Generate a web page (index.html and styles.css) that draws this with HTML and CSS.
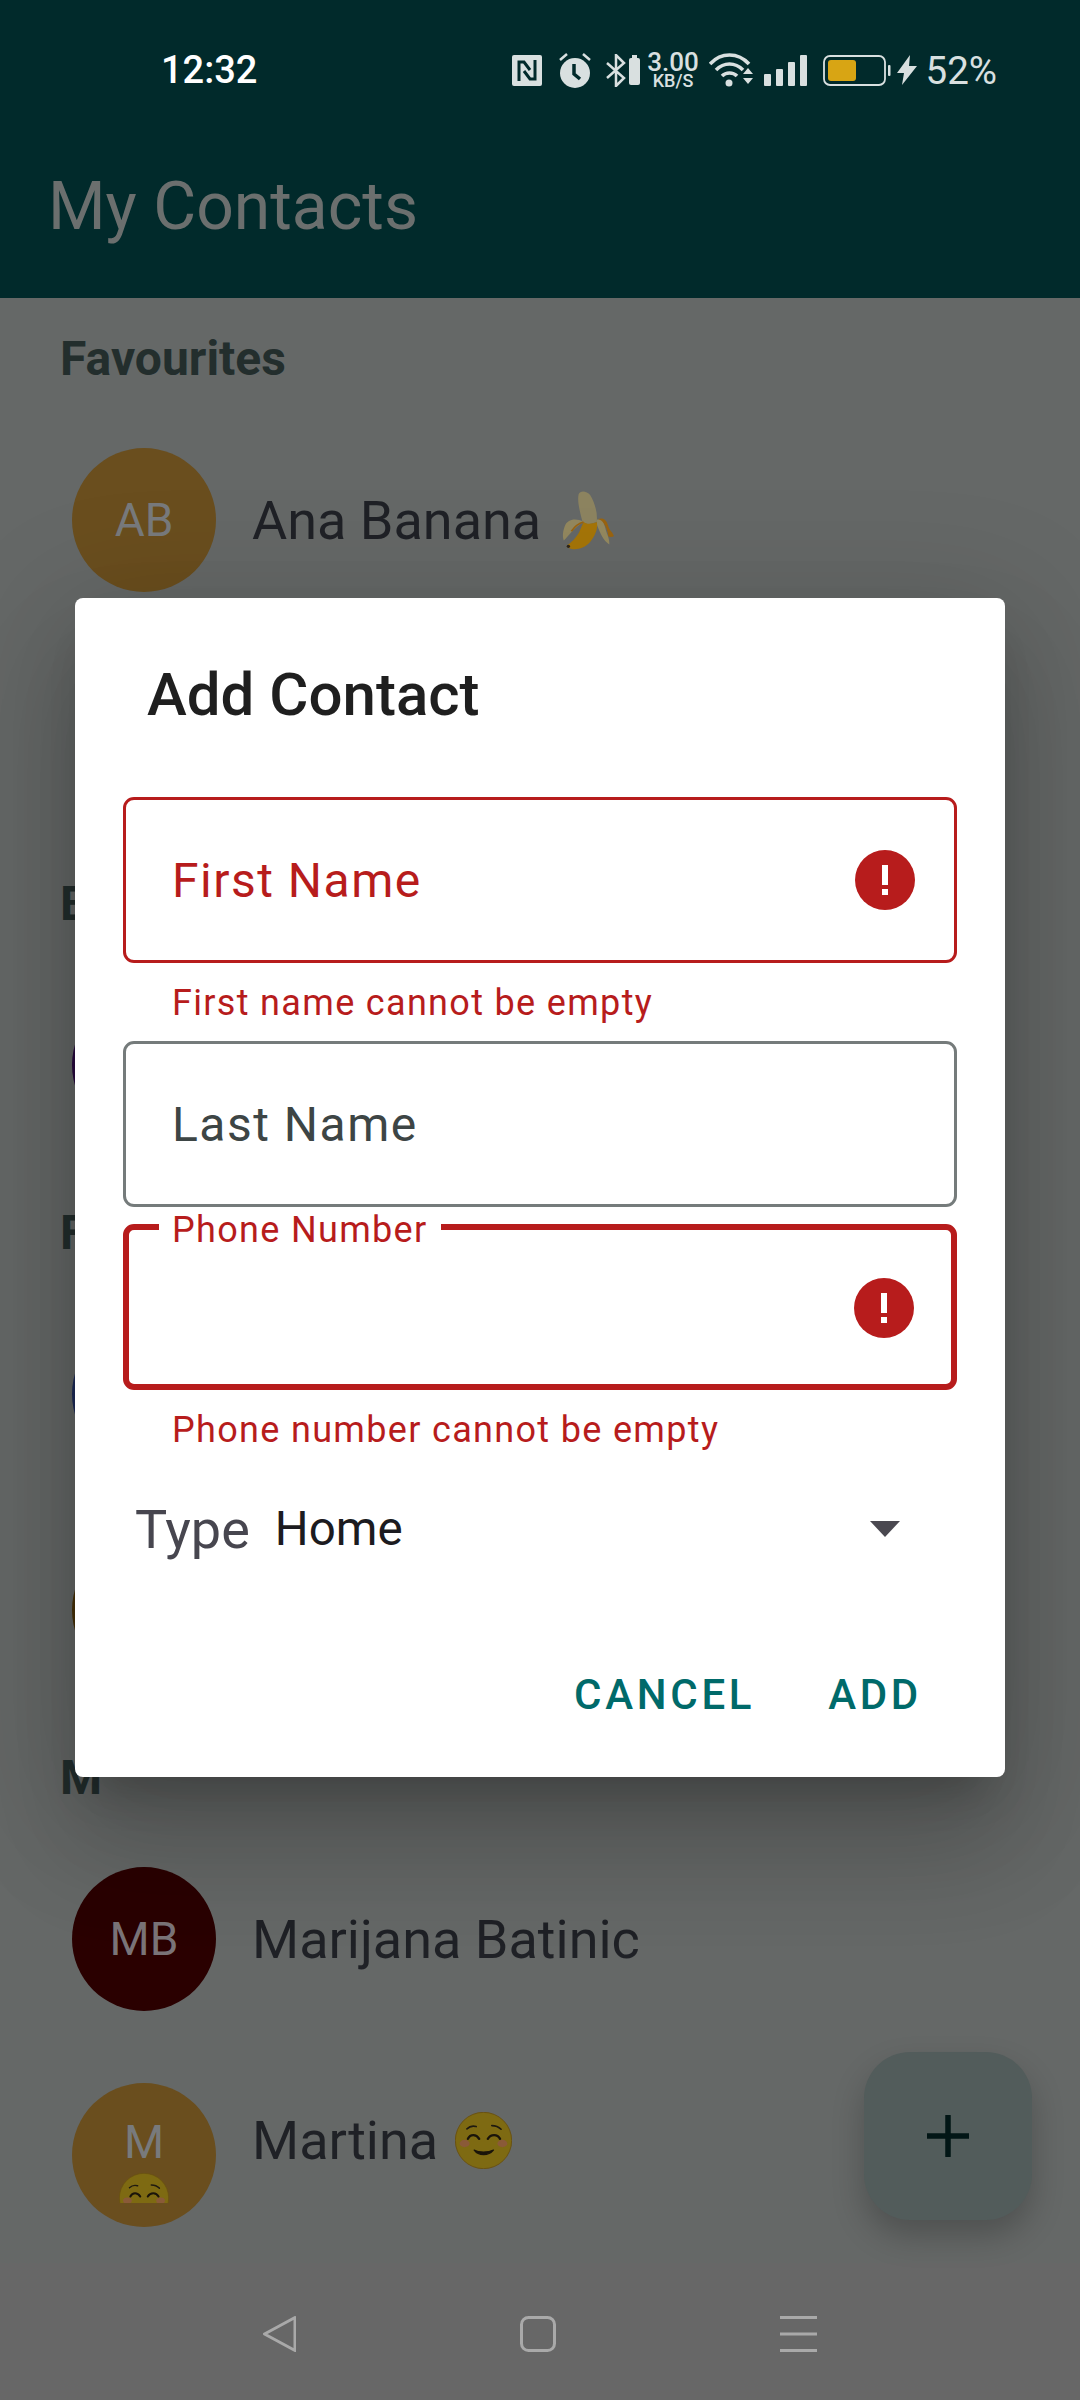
FILE: index.html
```html
<!DOCTYPE html>
<html lang="en">
<head>
	<meta charset="UTF-8">
	<title>My Contacts</title>
	<link rel="stylesheet" href="styles.css">
</head>
<body>
	<div class="phone">
		<div class="top">
			<div class="status">
				<span class="time">12:32</span>
				<div class="status-icons">
					<!-- nfc -->
					<svg class="ic-nfc" width="30" height="31" viewBox="0 0 30 31"><rect width="30" height="31" rx="2" fill="#d9e0e0"/><path d="M7 26V7h5l6 8M23 5v19h-5l-6-8" fill="none" stroke="#012a2b" stroke-width="3"/></svg>
					<!-- alarm -->
					<svg class="ic-alarm" width="32" height="35" viewBox="0 0 32 35"><circle cx="16" cy="20" r="15" fill="#d9e0e0"/><path d="M15 11v10l6 5" fill="none" stroke="#012a2b" stroke-width="3.5"/><path d="M1 7l7-6M31 7l-7-6" fill="none" stroke="#d9e0e0" stroke-width="2.5"/></svg>
					<!-- bluetooth with battery -->
					<svg class="ic-bt" width="34" height="33" viewBox="0 0 34 33"><path d="M1 9l17 15-8 8V1l8 8L1 24" fill="none" stroke="#d9e0e0" stroke-width="2.5"/><rect x="23" y="4" width="11" height="27" rx="2" fill="#d9e0e0"/><rect x="26" y="1" width="5" height="3" fill="#d9e0e0"/></svg>
					<div class="speed"><span class="speed-num">3.00</span><span class="speed-unit">KB/S</span></div>
					<!-- wifi -->
					<svg class="ic-wifi" width="44" height="34" viewBox="0 0 44 34"><path d="M1 11c11-12 28-12 39 0M7 17c8-8 19-8 27 0M13 23c4-4 11-4 15 0" fill="none" stroke="#d9e0e0" stroke-width="3.6"/><circle cx="20" cy="30" r="3.5" fill="#d9e0e0"/><path d="M34 21h10l-5-6zM34 25h10l-5 6z" fill="#d9e0e0"/></svg>
					<!-- signal -->
					<svg class="ic-signal" width="43" height="31" viewBox="0 0 43 31"><rect y="19" width="7" height="12" rx="1" fill="#d9e0e0"/><rect x="12" y="14" width="7" height="17" rx="1" fill="#d9e0e0"/><rect x="24" y="7" width="7" height="24" rx="1" fill="#d9e0e0"/><rect x="36" width="7" height="31" rx="1" fill="#d9e0e0"/></svg>
					<!-- battery -->
					<svg class="ic-batt" width="68" height="31" viewBox="0 0 68 31"><rect x="1" y="1" width="61" height="29" rx="6" fill="none" stroke="#d9e0e0" stroke-width="1.8"/><rect x="5" y="5" width="28" height="21" rx="3" fill="#d8a514"/><rect x="65" y="10" width="2.5" height="11" rx="1" fill="#d9e0e0"/></svg>
					<!-- bolt -->
					<svg class="ic-bolt" width="20" height="30" viewBox="0 0 20 30"><path d="M13 0L0 18h7L5 30 20 11h-8z" fill="#d9e0e0"/></svg>
					<span class="batt-num">52%</span>
				</div>
			</div>
			<div class="appbar">My Contacts</div>
		</div>

		<div class="list">
			<div class="head">Favourites</div>
			<div class="row">
				<div class="avatar yellow">AB</div>
				<div class="name">Ana Banana
					<svg class="emoji" width="53" height="60" viewBox="50 25 160 182">
						<path d="M100 38C105 25 125 28 135 40 150 65 158 95 155 122L130 130 112 122C105 95 95 60 100 38z" fill="#8d8460"/>
						<path d="M115 122C90 108 65 115 58 135 50 155 52 170 55 178 70 165 85 140 115 122z" fill="#93885f"/>
						<path d="M158 113C175 108 185 115 190 135 195 150 205 155 207 165 200 168 195 168 190 165 188 145 178 120 158 113z" fill="#9a6410"/>
						<path d="M155 115C170 112 177 125 181 140 186 160 195 175 193 190 175 180 165 155 155 130z" fill="#94895f"/>
						<path d="M115 122C125 130 140 128 155 122 160 140 150 165 135 183 115 205 85 210 70 200L66 192C85 180 100 160 105 145z" fill="#a57508"/>
						<path d="M115 122C100 126 88 136 78 150" fill="none" stroke="#9a6410" stroke-width="5"/>
						<circle cx="69" cy="196" r="5" fill="#2e2416"/>
					</svg>
				</div>
			</div>
			<div class="row"></div>
			<div class="head">B</div>
			<div class="row"><div class="avatar purple"></div></div>
			<div class="head">F</div>
			<div class="row"><div class="avatar blue"></div></div>
			<div class="row"><div class="avatar brown"></div></div>
			<div class="head">M</div>
			<div class="row">
				<div class="avatar maroon">MB</div>
				<div class="name">Marijana Batinic</div>
			</div>
			<div class="row">
				<div class="avatar yellow stack">
					<span>M</span>
					<svg class="emoji" width="50" height="50" viewBox="44 32 172 172"><use href="#smile"/></svg>
				</div>
				<div class="name lifted">Martina
					<svg class="emoji" width="57" height="57" viewBox="44 32 172 172">
						<g id="smile">
							<circle cx="130" cy="118" r="85" fill="#7e6a12" stroke="#6a5212" stroke-width="3"/>
							<ellipse cx="73" cy="127" rx="15" ry="11" fill="#8a5a38"/>
							<ellipse cx="187" cy="127" rx="15" ry="11" fill="#8a5a38"/>
							<path d="M80 83C88 75 98 73 108 76M155 73C165 73 175 76 183 84" fill="none" stroke="#1f1a10" stroke-width="5" stroke-linecap="round"/>
							<path d="M83 113C90 98 108 98 117 113M143 113C152 98 172 98 180 113" fill="none" stroke="#1a140a" stroke-width="7" stroke-linecap="round"/>
							<path d="M102 147C115 165 145 165 160 147 145 155 115 155 102 147z" fill="#1a140a" stroke="#1a140a" stroke-width="4" stroke-linejoin="round"/>
						</g>
					</svg>
				</div>
			</div>
		</div>

		<div class="nav">
			<svg width="33" height="36" viewBox="0 0 33 36"><path d="M32 1.500 1.500 18 32 34.500z" fill="none" stroke="#a9a9a9" stroke-width="3" stroke-linejoin="round"/></svg>
			<svg width="36" height="36" viewBox="0 0 36 36"><rect x="1.500" y="1.500" width="33" height="33" rx="7" fill="none" stroke="#a9a9a9" stroke-width="3"/></svg>
			<svg width="37" height="36" viewBox="0 0 37 36"><path d="M0 1.500h37M0 18h37M0 34.500h37" fill="none" stroke="#a9a9a9" stroke-width="3"/></svg>
		</div>

		<button class="fab"><svg width="42" height="42" viewBox="0 0 42 42"><path d="M21 1v40M1 21h40" fill="none" stroke="#021616" stroke-width="5.500" stroke-linecap="round"/></svg></button>

		<div class="dialog">
			<div class="dialog-title">Add Contact</div>

			<div class="field error">
				<span class="field-text">First Name</span>
				<svg class="err-icon" width="60" height="60" viewBox="0 0 60 60"><circle cx="30" cy="30" r="30" fill="#b71c1c"/><path d="M27 15h6v20h-6zM27 39h6v6h-6z" fill="#fff"/></svg>
			</div>
			<div class="helper">First name cannot be empty</div>

			<div class="field">
				<span class="field-text">Last Name</span>
			</div>

			<div class="field error focused">
				<span class="float-label">Phone Number</span>
				<svg class="err-icon" width="60" height="60" viewBox="0 0 60 60"><circle cx="30" cy="30" r="30" fill="#b71c1c"/><path d="M27 15h6v20h-6zM27 39h6v6h-6z" fill="#fff"/></svg>
			</div>
			<div class="helper">Phone number cannot be empty</div>

			<div class="type-row">
				<span class="type-label">Type</span>
				<span class="type-value">Home</span>
				<span class="arrow"></span>
			</div>

			<div class="actions">
				<span class="btn">CANCEL</span>
				<span class="btn">ADD</span>
			</div>
		</div>
	</div>
</body>
</html>
```

FILE: styles.css
```css
* {
	margin: 0;
	padding: 0;
	box-sizing: border-box;
}
body {
	width: 1080px;
	height: 2400px;
	overflow: hidden;
	font-family: Roboto, "Noto Sans", sans-serif;
}
.phone {
	width: 1080px;
	height: 2400px;
	position: relative;
	display: flex;
	flex-direction: column;
	background: #656867;
	overflow: hidden;
}

/* top bar */
.top {
	height: 298px;
	background: #012a2b;
}
.status {
	height: 140px;
	display: flex;
	align-items: center;
	padding: 0 83px 0 161px;
	justify-content: space-between;
}
.time {
	font-size: 38px;
	font-weight: 500;
	color: #fff;
}
.status-icons {
	display: flex;
	align-items: center;
	color: #d9e0e0;
}
.status-icons svg {
	display: block;
}
.ic-nfc { margin-right: 17px; }
.ic-alarm { margin-right: 15px; }
.ic-bt { margin-right: 8px; }
.speed {
	width: 51px;
	display: flex;
	flex-direction: column;
	align-items: center;
	margin-right: 10px;
}
.speed-num {
	font-size: 26px;
	line-height: 21px;
	font-weight: 500;
}
.speed-unit {
	font-size: 18px;
	line-height: 15px;
	font-weight: 500;
}
.ic-wifi { margin-right: 11px; }
.ic-signal { margin-right: 16px; }
.ic-batt { margin-right: 6px; }
.ic-bolt { margin-right: 9px; }
.batt-num {
	font-size: 38.500px;
}
.appbar {
	font-size: 66px;
	color: #6b6f6e;
	padding: 32px 0 0 48px;
	line-height: 70px;
}

/* list behind the dialog */
.list {
	flex: 1;
	overflow: hidden;
	padding-top: 1px;
}
.head {
	height: 113px;
	padding: 37px 0 0 60px;
	font-size: 48px;
	line-height: 46px;
	font-weight: 700;
	color: #232e2d;
}
.row {
	height: 216px;
	padding-left: 72px;
	display: flex;
	align-items: center;
}
.avatar {
	width: 144px;
	height: 144px;
	border-radius: 50%;
	overflow: hidden;
	display: flex;
	align-items: center;
	justify-content: center;
	flex-shrink: 0;
	font-size: 46px;
	color: #787a7c;
	margin-right: 36px;
}
.yellow { background: #6a4e1e; }
.purple { background: #2a0a40; }
.blue { background: #1e2c5a; }
.brown { background: #4a3208; }
.maroon {
	background: #2a0000;
	color: #7a7478;
}
.stack {
	flex-direction: column;
	justify-content: flex-start;
	padding-top: 32px;
}
.stack span {
	line-height: 54px;
}
.stack .emoji {
	margin-top: 4px;
	flex-shrink: 0;
	clip-path: inset(0 0 40% 0);
}
.name {
	font-size: 54px;
	color: #1f2126;
	display: flex;
	align-items: center;
	gap: 21px;
}
.lifted {
	gap: 17px;
	margin-bottom: 30px;
}

/* nav bar */
.nav {
	height: 137px;
	background: #676767;
	display: flex;
	justify-content: center;
	gap: 224px;
	padding-top: 53px;
}
.nav svg {
	display: block;
}

.fab {
	position: absolute;
	left: 864px;
	top: 2052px;
	width: 168px;
	height: 168px;
	border: none;
	border-radius: 46px;
	background: #525c5b;
	box-shadow: 0 16px 32px rgba(0,0,0,.22);
	display: flex;
	align-items: center;
	justify-content: center;
}

/* dialog */
.dialog {
	position: absolute;
	left: 75px;
	top: 598px;
	width: 930px;
	height: 1179px;
	background: #fff;
	border-radius: 8px;
	padding: 0 48px;
	box-shadow: 0 30px 41px -19px rgba(0,0,0,.2), 0 66px 104px 8px rgba(0,0,0,.14), 0 25px 126px 22px rgba(0,0,0,.12);
}
.dialog-title {
	height: 199px;
	padding: 65px 0 0 24px;
	font-size: 60px;
	line-height: 64px;
	font-weight: 500;
	color: #1f1f1f;
}
.field {
	position: relative;
	height: 166px;
	border: 3px solid #757b7b;
	border-radius: 11px;
	display: flex;
	align-items: center;
	justify-content: space-between;
	padding: 0 39px 0 46px;
	margin-bottom: 17px;
}
.field.error {
	border-color: #b71c1c;
	margin-bottom: 0;
}
.field.focused {
	border-width: 6px;
	padding: 2px 37px 0 43px;
	justify-content: flex-end;
}
.field-text {
	font-size: 48px;
	letter-spacing: 1.500px;
	color: #3d4545;
}
.error .field-text {
	color: #b71c1c;
}
.float-label {
	position: absolute;
	left: 30px;
	top: -15px;
	padding: 0 13px;
	background: #fff;
	font-size: 36px;
	line-height: 30px;
	letter-spacing: 1.330px;
	color: #b71c1c;
}
.err-icon {
	display: block;
	flex-shrink: 0;
}
.helper {
	height: 78px;
	padding: 19px 0 0 49px;
	font-size: 36px;
	line-height: 42px;
	letter-spacing: 1.330px;
	color: #b71c1c;
}
.type-row {
	height: 122px;
	display: flex;
	align-items: center;
	padding: 0 0 0 12px;
}
.type-label {
	font-size: 54px;
	color: #47464f;
	margin-right: 25px;
}
.type-value {
	font-size: 47.500px;
	color: #1c1b20;
	flex: 1;
}
.arrow {
	width: 0;
	height: 0;
	border-left: 15px solid transparent;
	border-right: 15px solid transparent;
	border-top: 16px solid #4a4850;
	margin-right: 57px;
}
.actions {
	display: flex;
	justify-content: flex-end;
	gap: 73px;
	padding: 83px 35px 0 0;
}
.btn {
	font-size: 42px;
	line-height: 44px;
	font-weight: 500;
	letter-spacing: 3.700px;
	color: #006a6a;
}
```
